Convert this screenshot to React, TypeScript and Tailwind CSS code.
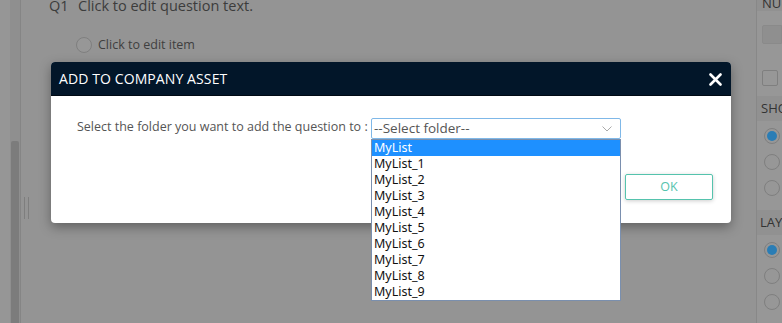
import React from "react";

const items = ["MyList", "MyList_1", "MyList_2", "MyList_3", "MyList_4", "MyList_5", "MyList_6", "MyList_7", "MyList_8", "MyList_9"];

function Radio({ on }: { on?: boolean }) {
  return (
    <div className="w-[16px] h-[16px] rounded-full border border-[#7f7f7f] bg-[#979797] flex items-center justify-center shrink-0">
      {on && <div className="w-[10px] h-[10px] rounded-full bg-[#2a7db5]" />}
    </div>
  );
}

export default function App() {
  return (
    <div className="relative w-[782px] h-[323px] overflow-hidden flex bg-[#949494]" style={{ fontFamily: "'Open Sans', 'Noto Sans', sans-serif" }}>
      {/* left strip */}
      <div className="w-[10px] h-full bg-[#969696]" />
      {/* scrollbar track */}
      <div className="w-[10px] h-full bg-[#8f8f8f] flex flex-col pt-[141px] px-[1px]">
        <div className="flex-1 bg-[#7c7c7c] rounded-t-[2px]" />
      </div>
      <div className="w-[1px] h-full bg-[#858585]" />
      {/* main canvas */}
      <div className="flex-1 h-full relative">
        <div className="pl-[28px] mt-[-5px] h-[22px] leading-[22px] flex items-baseline text-[14.5px] text-[#3c3c3c]">
          <span className="w-[29px]">Q1</span>
          <span>Click to edit question text.</span>
        </div>
        <div className="pl-[55px] mt-[19px] h-[18px] leading-[18px] flex items-center gap-[6px] text-[12.5px] text-[#3f3f3f]">
          <Radio />
          <span>Click to edit item</span>
        </div>
        <div className="absolute left-[3px] top-[197px] flex gap-[3px]">
          <div className="w-[1px] h-[22px] bg-[#7e7e7e]" />
          <div className="w-[1px] h-[22px] bg-[#7e7e7e]" />
        </div>
      </div>
      {/* right panel */}
      <div className="w-[26px] h-full border-l border-[#888] bg-[#979797] flex flex-col text-[13px] text-[#333]">
        <div className="h-[11px] bg-[#919191] pl-[5px] leading-[6px] overflow-hidden">NUM</div>
        <div className="mt-[14px] ml-[5px] h-[19px] bg-[#8f8f8f] border border-[#8a8a8a] rounded-l-[2px]" />
        <div className="mt-[26px] ml-[5px] w-[16px] h-[16px] border border-[#7f7f7f] rounded-[2px] bg-[#979797]" />
        <div className="mt-[10px] h-[25px] bg-[#919191] pl-[4px] flex items-center">SHOW</div>
        <div className="flex flex-col gap-[10px] pl-[7px] mt-[7px]">
          <Radio on />
          <Radio />
          <Radio />
        </div>
        <div className="mt-[14px] h-[25px] bg-[#919191] pl-[3px] flex items-center">LAYOUT</div>
        <div className="flex flex-col gap-[10px] pl-[7px] mt-[7px]">
          <Radio on />
          <Radio />
          <Radio />
        </div>
      </div>

      {/* modal */}
      <div className="absolute left-[51px] top-[62px] w-[680px] h-[161px] rounded-[4px] bg-white shadow-[0_4px_12px_rgba(0,0,0,0.35)] flex flex-col">
        <div className="h-[34px] bg-[#021629] rounded-t-[4px] border-b border-[#000a14] flex items-center justify-between pl-[8px] pr-[9px]">
          <span className="text-white text-[14px] tracking-[0.1px]">ADD TO COMPANY ASSET</span>
          <svg width="13" height="13" viewBox="0 0 13 13" className="mt-[1px]">
            <path d="M1.5 1.5 L11.5 11.5 M11.5 1.5 L1.5 11.5" stroke="white" strokeWidth="2.6" strokeLinecap="round" />
          </svg>
        </div>
        <div className="flex-1 relative">
          <div className="absolute left-[26px] top-[22px] flex items-center">
            <span className="text-[12.5px] text-[#555]">Select the folder you want to add the question to :</span>
          </div>
          <div className="absolute left-[320px] top-[22px] w-[250px] h-[21px] border border-[#7fb8e8] rounded-[2px] flex items-center justify-between pl-[2px] pr-[8px] text-[13.5px] text-[#555]">
            <span>--Select folder--</span>
            <svg width="10" height="6" viewBox="0 0 10 6">
              <path d="M0.5 0.5 L5 5 L9.5 0.5" stroke="#aaa" strokeWidth="1" fill="none" />
            </svg>
          </div>
          <div className="absolute left-[574px] top-[78px] w-[88px] h-[26px] border border-[#55c3ad] rounded-[2px] shadow-[0_1px_4px_rgba(0,0,0,0.2)] flex items-center justify-center text-[12.5px] text-[#55c3ad]">
            OK
          </div>
        </div>
      </div>

      {/* dropdown list */}
      <div className="absolute left-[371px] top-[139px] w-[250px] border border-[#7a8fae] bg-white flex flex-col text-[12.5px] text-[#111]" style={{ fontFamily: "'Noto Sans', sans-serif" }}>
        {items.map((it, i) => (
          <div key={it} className={"h-[16px] leading-[16px] pl-[2px] overflow-hidden " + (i === 0 ? "bg-[#1e90ff] text-white" : "")}>{it}</div>
        ))}
      </div>
    </div>
  );
}
